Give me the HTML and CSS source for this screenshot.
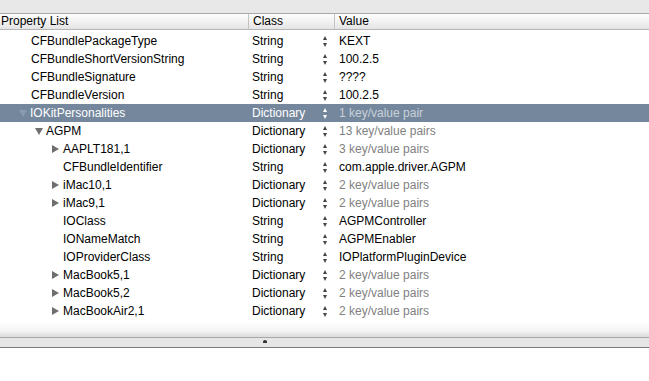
FILE: index.html
```html
<!DOCTYPE html>
<html lang="en">
<head>
  <meta charset="UTF-8" />
  <title>Property List</title>
  <link rel="stylesheet" href="styles.css">
</head>
<body>
  <div class="toolbar"></div>
  <div class="header">
    <div class="col key">Property List</div>
    <div class="col cls">Class</div>
    <div class="col val">Value</div>
  </div>

  <div class="rows">
    <div class="row"><div class="key l1">CFBundlePackageType</div><div class="cls">String</div><div class="step"></div><div class="val">KEXT</div></div>
    <div class="row"><div class="key l1">CFBundleShortVersionString</div><div class="cls">String</div><div class="step"></div><div class="val">100.2.5</div></div>
    <div class="row"><div class="key l1">CFBundleSignature</div><div class="cls">String</div><div class="step"></div><div class="val">????</div></div>
    <div class="row"><div class="key l1">CFBundleVersion</div><div class="cls">String</div><div class="step"></div><div class="val">100.2.5</div></div>
    <div class="row selected"><div class="key l1"><span class="tri down"></span>IOKitPersonalities</div><div class="cls">Dictionary</div><div class="step"></div><div class="val dim">1 key/value pair</div></div>
    <div class="row"><div class="key l2"><span class="tri down"></span>AGPM</div><div class="cls">Dictionary</div><div class="step"></div><div class="val dim">13 key/value pairs</div></div>
    <div class="row"><div class="key l3"><span class="tri"></span>AAPLT181,1</div><div class="cls">Dictionary</div><div class="step"></div><div class="val dim">3 key/value pairs</div></div>
    <div class="row"><div class="key l3">CFBundleIdentifier</div><div class="cls">String</div><div class="step"></div><div class="val">com.apple.driver.AGPM</div></div>
    <div class="row"><div class="key l3"><span class="tri"></span>iMac10,1</div><div class="cls">Dictionary</div><div class="step"></div><div class="val dim">2 key/value pairs</div></div>
    <div class="row"><div class="key l3"><span class="tri"></span>iMac9,1</div><div class="cls">Dictionary</div><div class="step"></div><div class="val dim">2 key/value pairs</div></div>
    <div class="row"><div class="key l3">IOClass</div><div class="cls">String</div><div class="step"></div><div class="val">AGPMController</div></div>
    <div class="row"><div class="key l3">IONameMatch</div><div class="cls">String</div><div class="step"></div><div class="val">AGPMEnabler</div></div>
    <div class="row"><div class="key l3">IOProviderClass</div><div class="cls">String</div><div class="step"></div><div class="val">IOPlatformPluginDevice</div></div>
    <div class="row"><div class="key l3"><span class="tri"></span>MacBook5,1</div><div class="cls">Dictionary</div><div class="step"></div><div class="val dim">2 key/value pairs</div></div>
    <div class="row"><div class="key l3"><span class="tri"></span>MacBook5,2</div><div class="cls">Dictionary</div><div class="step"></div><div class="val dim">2 key/value pairs</div></div>
    <div class="row"><div class="key l3"><span class="tri"></span>MacBookAir2,1</div><div class="cls">Dictionary</div><div class="step"></div><div class="val dim">2 key/value pairs</div></div>
  </div>

  <div class="fade"></div>
  <div class="splitter"><span class="grip"></span></div>
  <div class="below"></div>
</body>
</html>
```

FILE: styles.css
```css
html, body {
  margin: 0;
  padding: 0;
  background: #fff;
  font-family: "Liberation Sans", Arial, sans-serif;
  font-size: 12px;
  color: #000;
  overflow: hidden;
}
.toolbar {
  height: 13px;
  background: #e8e8e8;
  border-bottom: 1px solid #a9a9a9;
}
.header {
  display: flex;
  height: 15px;
  line-height: 15px;
  background: linear-gradient(to bottom, #fdfdfd 0%, #f2f2f2 50%, #e4e4e4 100%);
  border-bottom: 1px solid #b6b6b6;
}
.header .col {
  padding-left: 1px;
  box-sizing: border-box;
}
.header .key { width: 248px; }
.header .cls { width: 86px; border-left: 1px solid #c4c4c4; padding-left: 4px; }
.header .val { flex: 1; border-left: 1px solid #c4c4c4; padding-left: 4px; }

.rows {
  padding-top: 2px;
}
.row {
  display: flex;
  align-items: center;
  height: 18px;
  line-height: 18px;
}
.row .key {
  width: 252px;
  box-sizing: border-box;
  display: flex;
  align-items: center;
  white-space: nowrap;
}
.l1 { padding-left: 31px; }
.l2 { padding-left: 47px; }
.l3 { padding-left: 63px; }
.row .cls { width: 70px; }
.row .step {
  width: 7px;
  height: 13px;
  margin-right: 10px;
  position: relative;
}
.step::before, .step::after {
  content: "";
  position: absolute;
  left: 1px;
  border-left: 2.5px solid transparent;
  border-right: 2.5px solid transparent;
}
.step::before { top: 1px; border-bottom: 4px solid #444; }
.step::after { bottom: 1px; border-top: 4px solid #444; }
.row .val { flex: 1; white-space: nowrap; }
.val.dim { color: #7f7f7f; }

.tri {
  width: 0;
  height: 0;
  margin-left: -11px;
  margin-right: 4px;
  border-top: 4px solid transparent;
  border-bottom: 4px solid transparent;
  border-left: 7px solid #6f6f6f;
}
.tri.down {
  margin-left: -12px;
  margin-right: 3px;
  border-left: 4.5px solid transparent;
  border-right: 4.5px solid transparent;
  border-top: 7px solid #6f6f6f;
  border-bottom: 0;
}

.selected { background: #74879d; color: #fff; }
.selected .val.dim { color: #c9d1db; }
.selected .step::before { border-bottom-color: #fff; }
.selected .step::after { border-top-color: #fff; }
.selected .tri.down { border-top-color: #8a9bb0; }

.fade {
  height: 15px;
  margin-top: 2px;
  background: linear-gradient(to bottom, #ffffff 0%, #f4f4f4 60%, #dcdcdc 100%);
  border-bottom: 1px solid #a8a8a8;
}
.splitter {
  height: 9px;
  background: #e6e6e6;
  border-bottom: 1px solid #7a7a7a;
  display: flex;
  padding-left: 263px;
}
.grip {
  width: 4px;
  height: 3px;
  margin-top: 2px;
  border-radius: 50% 50% 0 0;
  background: #333;
}
.below { height: 40px; background: #fff; }
```
